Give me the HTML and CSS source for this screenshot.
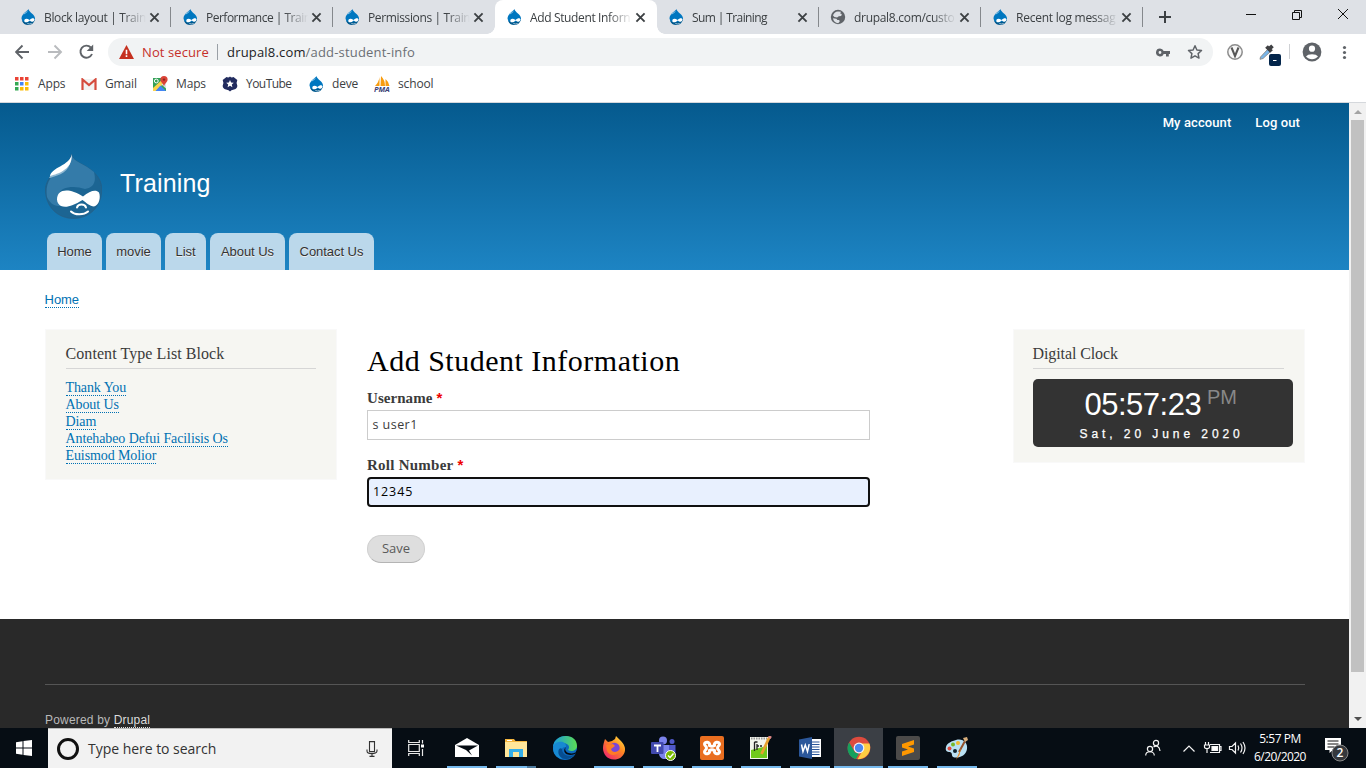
FILE: index.html
```html
<!DOCTYPE html>
<html lang="en">
<head>
<meta charset="utf-8">
<title>Add Student Information | Training</title>
<link rel="stylesheet" href="styles.css">
</head>
<body>
<svg class="defs" width="0" height="0">
  <symbol id="drop" viewBox="0 0 16 16">
    <path fill="#0077c0" d="M8.4 0C8 1.8 1.500 4.600 1.500 9.600a6.800 6.400 0 0 0 13.500 0C15 5.200 9 3.500 8.400 0z"/>
    <path fill="#00598e" d="M13 11c-2 2.500-8 3-11 .5C3 14.500 5 16 8.400 16c3 0 5.600-2 6.400-5z"/>
    <path fill="#9ccdea" d="M7.800 1.600C6.500 3 4.500 3.900 3.200 5.600c2-.6 4-2 4.600-4z"/>
    <path fill="#fff" d="M4.300 11.700c0-2.300 2.700-2.700 5.200-.7 2-1.700 4.500-2.500 4.800-.4.300 2.400-2.500 3-4.600.8-2 2-5.400 3-5.400.3zM7 14c1.800 1 3.300 1 5 0-.5 1.600-4.400 1.700-5 0z"/>
  </symbol>
  <symbol id="close" viewBox="0 0 10 10"><path d="M1.300 1.300l7.400 7.400M8.700 1.300L1.300 8.700" stroke="#3c4043" stroke-width="1.700"/></symbol>
</svg>

<div class="tabstrip">
  <div class="tab"><svg class="fav"><use href="#drop"/></svg><span class="tab-title">Block layout | Train</span><svg class="x"><use href="#close"/></svg></div>
  <div class="tab"><svg class="fav"><use href="#drop"/></svg><span class="tab-title t-perf">Performance | Train</span><svg class="x"><use href="#close"/></svg></div>
  <div class="tab no-sep"><svg class="fav"><use href="#drop"/></svg><span class="tab-title">Permissions | Train</span><svg class="x"><use href="#close"/></svg></div>
  <div class="tab active no-sep"><svg class="fav"><use href="#drop"/></svg><span class="tab-title">Add Student Inforn</span><svg class="x"><use href="#close"/></svg></div>
  <div class="tab"><svg class="fav"><use href="#drop"/></svg><span class="tab-title full">Sum | Training</span><svg class="x"><use href="#close"/></svg></div>
  <div class="tab"><svg class="fav" viewBox="0 0 16 16"><circle cx="8" cy="8" r="7.200" fill="#5f6368"/><path fill="#dee1e6" d="M8 2.500l3 .3-.8 1.700 1.600.6-.6 1.900-2.400.3-1.700 1.300-2.600-.5-1.500-1.500C3.500 4.500 5.500 2.500 8 2.500zM3 9.200l3.400.6 1 1.200 1.800.1.500 1.400-1.500 1.700C5.500 14 3.200 12 3 9.200z"/></svg><span class="tab-title t-url">drupal8.com/custo</span><svg class="x"><use href="#close"/></svg></div>
  <div class="tab"><svg class="fav"><use href="#drop"/></svg><span class="tab-title t-log">Recent log messag</span><svg class="x"><use href="#close"/></svg></div>
  <svg class="newtab" viewBox="0 0 14 14"><path d="M7 1v12M1 7h12" stroke="#3c4043" stroke-width="2"/></svg>
  <svg class="winctl" viewBox="0 0 104 14" fill="none" stroke="#111" stroke-width="1"><path d="M0 7.500h10M46.500 5.500h7v7h-7zM48.500 5V3.500h7v7H54M92 2l10 10M102 2L92 12"/></svg>
</div>

<div class="toolbar">
  <svg class="navs" viewBox="0 0 84 20" fill="none" stroke="#5f6368" stroke-width="1.900"><path d="M14 10H1.500M7.500 3.500L1 10l6.500 6.500"/><path stroke="#b9bbbe" d="M33 10h12.500M39.500 3.500L46 10l-6.500 6.500"/><path d="M75.800 5.500A6 6 0 1 0 77 12"/><path d="M78.200 2.500v6.500h-6.500z" fill="#5f6368" stroke="none"/></svg>
  <div class="omnibox">
    <svg class="warn" viewBox="0 0 14 13"><path d="M7 0l7 13H0z" fill="#c5301f"/><path d="M7 4.500v4M7 9.500v1.600" stroke="#fff" stroke-width="1.500"/></svg>
    <span class="insecure">Not secure</span><i class="vsep"></i>
    <span class="url">drupal8.com<span>/add-student-info</span></span>
    <svg class="key" viewBox="0 0 14 9"><path fill="#5f6368" fill-rule="evenodd" d="M4 .4a4 4 0 0 1 3.700 2.500H14v3h-1.200v2.600H10V5.900H7.700A4 4 0 1 1 4 .4zm0 2.700a1.400 1.400 0 1 0 0 2.800 1.400 1.400 0 0 0 0-2.800z"/></svg>
    <svg class="star" viewBox="0 0 16 16"><path fill="none" stroke="#5f6368" stroke-width="1.500" stroke-linejoin="round" d="M8 1.800l1.900 4.200 4.600.5-3.400 3.100.9 4.500-4-2.300-4 2.300.9-4.500L1.500 6.500l4.600-.5z"/></svg>
  </div>
  <svg class="ext" viewBox="0 0 130 28"><circle cx="9" cy="14" r="7.200" fill="#f7f7f7" stroke="#8c8c8c" stroke-width="1.500"/><path d="M5.500 9.500L9 18l3.500-8.500" fill="none" stroke="#555" stroke-width="2"/><path d="M34.500 19l7.500-8 2.500 2.500-7.500 7-3 .8z" fill="#79b6ea" stroke="#888" stroke-width=".9"/><path d="M40.500 8.500l5 5M43 11l3.500-3.200" stroke="#3f4043" stroke-width="3.800"/><rect x="43" y="16" width="12" height="12" rx="2" fill="#03254b"/><path d="M47 22.500h3.500" stroke="#fff"/><path d="M63.500 6v15" stroke="#cfd1d4"/><circle cx="86" cy="14" r="9.400" fill="#5f6368"/><circle cx="86" cy="10.700" r="3.100" fill="#fff"/><path d="M80 18.600c1.400-3.300 10.600-3.300 12 0-2.800 3.400-9.200 3.400-12 0z" fill="#fff"/><g fill="#5f6368"><circle cx="118.500" cy="9.500" r="1.600"/><circle cx="118.500" cy="14.500" r="1.600"/><circle cx="118.500" cy="19.500" r="1.600"/></g></svg>
</div>

<div class="bookmarks">
  <div class="bm b-apps"><svg viewBox="0 0 14 14"><path fill="#ea4335" d="M0 0h3.500v3.500H0zM5 0h3.500v3.500H5zM10 0h3.500v3.500H10z"/><path fill="#34a853" d="M0 5h3.500v3.500H0zM0 10h3.500v3.500H0z"/><path fill="#4285f4" d="M5 5h3.500v3.500H5z"/><path fill="#fbbc04" d="M10 5h3.500v3.500H10zM5 10h3.500v3.500H5zM10 10h3.500v3.500H10z"/></svg><span>Apps</span></div>
  <div class="bm b-gmail"><svg viewBox="0 0 16 12"><path fill="#f2f2f2" d="M1 1h14v11H1z"/><path fill="none" stroke="#d54b3d" stroke-width="2.200" d="M1.500 12V1.500L8 7l6.500-5.500V12"/></svg><span>Gmail</span></div>
  <div class="bm b-maps"><svg viewBox="0 0 16 16"><path fill="#34a057" d="M1 2h13v13H1z"/><path fill="#fcd34b" d="M1 12L12 2l2 3L4 15H1z"/><path fill="#4285f4" d="M3.500 15L8.500 9.500 14 15z"/><path fill="#dce3e8" d="M9.500 8.500l4.500 4V5z"/><circle cx="4.300" cy="5" r="1.900" fill="none" stroke="#fff"/><path fill="#db4437" d="M12 0a3.600 3.600 0 0 1 3.600 3.600c0 2.500-2.800 3.500-3.600 7-.8-3.500-3.600-4.500-3.600-7A3.600 3.600 0 0 1 12 0z"/><circle cx="12" cy="3.600" r="1.200" fill="#8f281e"/></svg><span>Maps</span></div>
  <div class="bm b-yt"><svg viewBox="0 0 16 16"><path fill="#222c5f" d="M4.500 1Q6.500 2 8 .5 9.500 2 11.500 1L15.300 4Q14 6.500 15.300 9.500q.2 3-3.300 4-3 .5-4 2-1-1.500-4-2Q.5 12.500.7 9.500 2 6.500.7 4z"/><path fill="#fff" d="M8 4l1.100 2.500 2.700.2-2 1.800.6 2.700L8 9.800l-2.400 1.400.6-2.700-2-1.800 2.700-.2z"/></svg><span>YouTube</span></div>
  <div class="bm b-deve"><svg><use href="#drop"/></svg><span>deve</span></div>
  <div class="bm b-school"><svg viewBox="0 0 16 16"><path fill="#f89c0e" d="M5.500 1v9H1q4-4 4.500-9zM7 0q4 4 4 10H6.500zM11.500 3q3.500 3 4 7h-4z"/><text x="0" y="15.500" font-size="6.500" font-weight="700" font-style="italic" textLength="15.500" lengthAdjust="spacingAndGlyphs" fill="#3d4478">PMA</text></svg><span>school</span></div>
</div>

<div class="viewport">
  <div class="page">
    <header class="header">
      <nav class="user"><span>My account</span><span>Log out</span></nav>
      <div class="brand">
        <svg class="logo" viewBox="0 0 57 65"><path fill="#1c6593" stroke="#2a5c80" stroke-width=".6" d="M26.500.5c2 8 13 9 22 17.500C55 24 57 30 56.700 36 56.500 53 44 64.500 28.500 64.500S.5 53 .5 36C.5 17 25 14 26.500.500z"/><path fill="#347ba9" d="M26.500.5c2 8 13 9 22.500 17.500 3 12-2 16-9 17-11-4-25-2-26 5 0 4 3 8 6 10-8 5-15 0-18-7C-2 17 25 14 26.500.5z"/><path fill="#8eb8d2" d="M4 23.500C9 18 19 16 26 6c-2 12-11 15-21 18z"/><path fill="#fff" d="M26.800 0C27 9 24 13 17 17.500c-5 3-9 3-12 5C6 13 25 12 26.800 0zM12 45.500c0-10 11-12.500 26-3 7-6 13-7.500 16-4 2 5 0 13-5 14-4 0-8-4-11.500-6.500C28 52 21 54 16 52c-2-1-4-3.500-4-6.500z"/><path fill="none" stroke="#fff" stroke-width="2" stroke-linecap="round" d="M32 53.500c1-4 8-4 9 0M26 57.500c4 4 13 3.500 17 0"/></svg>
        <span class="site">Training</span>
      </div>
      <nav class="menu"><span style="width:55px">Home</span><span style="width:55px">movie</span><span style="width:41px">List</span><span style="width:75px">About Us</span><span style="width:85px">Contact Us</span></nav>
    </header>
    <div class="crumb"><span class="link">Home</span></div>
    <div class="columns">
      <aside class="block left">
        <h2 class="t-list">Content Type List Block</h2>
        <ul>
          <li><span class="link">Thank You</span></li>
          <li><span class="link">About Us</span></li>
          <li><span class="link">Diam</span></li>
          <li><span class="link">Antehabeo Defui Facilisis Os</span></li>
          <li><span class="link">Euismod Molior</span></li>
        </ul>
      </aside>
      <main class="main">
        <h1>Add Student Information</h1>
        <div class="label"><span>Username</span><b class="req">*</b></div>
        <div class="field">s user1</div>
        <div class="label second"><span class="roll">Roll Number</span><b class="req">*</b></div>
        <div class="field focus">12345</div>
        <div class="save">Save</div>
      </main>
      <aside class="block right">
        <h2 class="t-clock">Digital Clock</h2>
        <div class="clock">
          <div class="time"><span class="digits">05:57:23</span><span class="pm">PM</span></div>
          <div class="date">Sat, 20 June 2020</div>
        </div>
      </aside>
    </div>
    <footer class="footer"><div class="powered">Powered by <span>Drupal</span></div></footer>
  </div>
  <div class="scroll"><i class="up"></i><i class="thumb"></i><i class="down"></i></div>
</div>

<div class="taskbar">
  <div class="start"><svg viewBox="0 0 16 16" width="16" height="16"><path fill="#fff" d="M0 2.200L6.500 1.300v6.200H0zM7.500 1.100L16 0v7.500H7.500zM0 8.500h6.500v6.200L0 13.800zM7.500 8.500H16V16l-8.500-1.100z"/></svg></div>
  <div class="search"><i class="cortana"></i><span>Type here to search</span><svg class="mic" viewBox="0 0 12 16" fill="none" stroke="#333" stroke-width="1.100"><path d="M3.500.6h5v10h-5zM1 8.500v1.500c0 3.500 10 3.500 10 0V8.500M6 12.500v3M3.500 15.400h5"/></svg></div>
  <div class="tview"><svg width="16" height="16" viewBox="0 0 16 16" fill="none" stroke="#e8e8e8" stroke-width="1.200"><path d="M.7 0v2.500h10.600V0M.7 4.500h10.600v7H.7zM.7 16v-2.500h10.600V16M14.500 0v3.500M14.500 9v7"/><path d="M13 4.500h3v3h-3z" fill="#fff" stroke="none"/></svg></div>
  <div class="apps">
    <div class="app run"><svg viewBox="0 0 24 24"><path fill="#fff" d="M0 9l12-7 12 7v12H0z"/><path fill="#050b12" d="M1 9.500h22L14 14.500l3 5L11 14z"/></svg></div>
    <div class="app run multi"><svg viewBox="0 0 24 24"><path fill="#f4b63f" d="M1 3h9l1.500 2H23v2H1z"/><path fill="#ffe69a" d="M1 6h22v15H1z"/><path fill="#35aee8" d="M5 13h14v8h-4v-5H9v5H5z"/><path fill="#fff" d="M3 4h5v1H3z"/></svg></div>
    <div class="app"><svg viewBox="0 0 24 24"><defs><linearGradient id="eg"><stop stop-color="#199bdc"/><stop offset="1" stop-color="#5bdc54"/></linearGradient></defs><circle cx="12" cy="12" r="12" fill="#0d6abf"/><path fill="url(#eg)" d="M0 11C1-3 24-4 24 10c0 5-6 6-9 4 3-4-1-7-5-7-5 0-9 2-10 4z"/><path fill="#1789d2" d="M0 12c1-8 14-8 13-1-5-1-6 5-4 12C3 22 0 17 0 12z"/><path fill="#064d91" d="M9 13c0 6 7 9 13 5-4 6-13 7-16 1-2-5 1-8 3-6z"/><path fill="#050b12" d="M13.500 10.500c-4 4 2 9 9 6l1.500-2.500.5 2.500L22 18c-7 3-13-1-10-6z"/></svg></div>
    <div class="app run"><svg viewBox="0 0 24 24"><defs><linearGradient id="fg" x1="1" y1="0" x2=".2" y2="1"><stop stop-color="#fff04a"/><stop offset=".45" stop-color="#ff8a20"/><stop offset="1" stop-color="#f0246d"/></linearGradient></defs><path fill="url(#fg)" d="M3 3l3 3 4-1 3-2 1-3 5 5c3 3 5 7 3.700 11C21 21 17 23.500 12 23.500 5 23.500 1 18 1 12c0-3 1-6 2-9z"/><circle cx="12.500" cy="12" r="5.200" fill="#7a45d8"/><path fill="#ff7b25" d="M4 9l7-1 2 2-4 3c1 4 6 4 9 0-1 7-10 8-13 2z"/></svg></div>
    <div class="app run"><svg viewBox="0 0 24 24" overflow="visible"><circle cx="12" cy="4.500" r="4" fill="#7b83eb"/><circle cx="21" cy="5.500" r="2.500" fill="#5059c9"/><path fill="#7b83eb" d="M8 9h11v8c0 8-11 8-11 0z"/><path fill="#5059c9" d="M18 9h6.500v7c0 5-6.500 5-6.500 0z"/><rect y="6" width="12.500" height="12" rx="1" fill="#4149ad"/><path d="M3 9.500h7M6.500 9.500V16" stroke="#fff" stroke-width="1.800"/><circle cx="19.500" cy="19.500" r="5" fill="#78b900" stroke="#fff"/><path d="M17 19.500l2 2 3.500-4" fill="none" stroke="#fff" stroke-width="1.400"/></svg></div>
    <div class="app run"><svg viewBox="0 0 24 24"><rect width="24" height="24" rx="2" fill="#e96e20"/><path d="M9.500 9.500c1-4-5-4-5-1.500 0 2 2 2 2 4s-2 2-2 4c0 2.500 6 2.500 5-1.500 1.500-1 3.500-1 5 0-1 4 5 4 5 1.500 0-2-2-2-2-4s2-2 2-4c0-2.500-6-2.500-5 1.500-1.500 1-3.500 1-5 0z" fill="none" stroke="#fff" stroke-width="3"/></svg></div>
    <div class="app run"><svg viewBox="0 0 24 24"><path fill="#f2f5ed" d="M1 1h18v22H1z"/><path fill="#70c91c" d="M2 14l16-4v12H2z"/><path d="M2 2.500h16" stroke="#999" stroke-width="2" stroke-dasharray="1.500 1"/><path d="M5.500 6v9M5.500 6h3M8 10h2M11 10h2M8 8v6" stroke="#222" stroke-width="1.300" fill="none"/><path d="M20.500 1L12.500 18" stroke="#e8a12d" stroke-width="2.800"/><path d="M21.500 0l-1.200 2.200" stroke="#d88" stroke-width="3"/></svg></div>
    <div class="app run"><svg viewBox="0 0 24 24"><path fill="#fff" d="M12 3h11v18H12z"/><path d="M14 6h7.500M14 8.500h7.500M14 11h7.500M14 13.500h7.500M14 16h7.500M14 18.500h7.500" stroke="#2b579a" stroke-width="1.200"/><path fill="#2b579a" d="M1 3.500L14 1v22L1 20.500z"/><path fill="none" stroke="#fff" stroke-width="1.500" d="M3.500 8.500l1.500 7 2.300-6.500 2.200 6.500 1.700-7.300"/></svg></div>
    <div class="app run current"><svg viewBox="0 0 24 24"><circle cx="12" cy="12" r="11.300" fill="#dd4b3e"/><path fill="#16a05d" d="M2.200 6.400L8 16.500l4 1-3 5.500C1 21-1.500 12 2.200 6.400z"/><path fill="#ffcd42" d="M12 7.500h10.400C25.500 15 19 23.500 10.500 23.200L16 14z"/><circle cx="12" cy="12" r="5.400" fill="#f5f5f5"/><circle cx="12" cy="12" r="4.200" fill="#4b87ee"/></svg></div>
    <div class="app run"><svg viewBox="0 0 24 24"><rect width="24" height="24" rx="2" fill="#4b4a49"/><path fill="#ff9800" d="M6 8l12-4v4.500l-6 2 6 2V16L6 20v-4.500l6-2-6-2z"/></svg></div>
    <div class="app run"><svg viewBox="0 0 24 24"><path fill="#b9e0f3" d="M11 4C18 2 23 7 22 13c-1 7-9 10-14 8-2-2 0-4-3-5-3 0-5-1-4-5 1-4 6-6 10-7z"/><circle cx="4.500" cy="12.500" r="2" fill="#e04c40"/><circle cx="8" cy="8.500" r="2" fill="#76b82a"/><circle cx="13" cy="7" r="2" fill="#f1b82d"/><circle cx="10" cy="15" r="2" fill="#10232e"/><path d="M20 5l-6 11" stroke="#92522c" stroke-width="2"/><path d="M18 2l4-1 1 3-3 2z" fill="#d7ad7b"/><path d="M16 12l-1.500 7L11 24z" fill="#ed8a21"/></svg></div>
  </div>
  <svg class="tray" viewBox="0 0 104 24" fill="none" stroke="#f4f4f4" stroke-width="1.200"><circle cx="5" cy="13" r="2.600"/><path d="M.7 19.500c0-5 8.600-5 8.600 0"/><circle cx="11" cy="7" r="2.600"/><path d="M8.500 11c3-2 6-.5 6.500 4"/><path d="M38.500 15.500l5.500-5.500 5.500 5.500"/><path d="M65 8.500h9.500v8H65M74.500 10.500H76v4h-1.500"/><path d="M67 10.500h5.500v4H67z" fill="#fff"/><path d="M60.500 6v2.500M63.500 6v2.500M59.500 9h5v2c0 2-5 2-5 0zM62 12v5"/><path d="M84.500 10.500h2.500l3.500-3.500v10L87 13.500h-2.500zM93 9.500q1.500 2.500 0 5M95.500 7.500q3 4.500 0 9M98 6q4 6 0 12"/></svg>
  <div class="when"><span>5:57 PM</span><span class="day">6/20/2020</span></div>
  <svg class="notif" viewBox="0 0 26 28"><path fill="#fff" d="M1 2h16v12H9l-3.500 3v-3H1z"/><path d="M3.500 5h11M3.500 8h11M3.500 11h7" stroke="#111" stroke-width="1.200"/><circle cx="16" cy="17" r="8" fill="#35383c" stroke="#888"/><text x="16" y="21.300" text-anchor="middle" fill="#fff" font-size="12" font-weight="600">2</text></svg>
</div>
</body>
</html>
```
FILE: styles.css
```css
* { box-sizing: border-box; }
body { margin: 0; width: 1366px; height: 768px; overflow: hidden; display: flex; flex-direction: column; background: #fff; font-family: "Open Sans", "Noto Sans", sans-serif; font-size: 12px; color: #3c4043; }
svg { display: block; flex: none; }
i { display: block; flex: none; }
.defs { position: absolute; }
h1, h2, ul { margin: 0; padding: 0; list-style: none; font-weight: 400; }

.tabstrip { height: 34px; flex: none; background: #dee1e6; display: flex; padding-left: 9px; }
.tab { width: 162px; height: 34px; flex: none; display: flex; align-items: center; padding-left: 11px; background: linear-gradient(#85888c, #85888c) no-repeat right 0 top 7px / 1px 20px; }
.tab.no-sep { background: none; }
.tab.active { background: #fff; border-radius: 8px 8px 0 0; position: relative; }
.tab.active::before, .tab.active::after { content: ""; position: absolute; bottom: 0; width: 8px; height: 8px; }
.tab.active::before { left: -8px; background: radial-gradient(circle at 0 0, #dee1e6 7.500px, #fff 8px); }
.tab.active::after { right: -8px; background: radial-gradient(circle at 100% 0, #dee1e6 7.500px, #fff 8px); }
.fav { width: 16px; height: 16px; margin-right: 8px; }
.tab-title { width: 105px; white-space: nowrap; letter-spacing: -.36px; -webkit-mask-image: linear-gradient(90deg, #000 78px, transparent 102px); }
.t-perf { letter-spacing: -.5px; }
.t-url { letter-spacing: -.3px; }
.t-log { letter-spacing: -.25px; }
.full { letter-spacing: -.6px; }
.x { width: 11px; height: 11px; }
.newtab { width: 14px; height: 14px; margin: 10px 0 0 15px; }
.winctl { width: 104px; height: 14px; margin: 7px 0 0 74px; }

.toolbar { height: 36px; flex: none; display: flex; align-items: center; padding-left: 15px; }
.navs { width: 84px; height: 20px; margin-right: 9px; }
.omnibox { width: 1105px; height: 28px; border-radius: 14px; background: #f1f3f4; display: flex; align-items: center; padding-left: 11px; }
.warn { width: 15px; height: 14px; margin-right: 8px; }
.insecure { width: 67px; color: #c5302a; white-space: nowrap; font-size: 13px; letter-spacing: .1px; }
.vsep { width: 1px; height: 16px; background: #9aa0a6; margin: 0 9px 0 8px; }
.url { width: 929px; color: #202124; font-size: 13px; letter-spacing: .18px; }
.url span { color: #6b6f74; }
.key { width: 14px; height: 9px; margin-right: 17px; }
.star { width: 16px; height: 16px; }
.ext { width: 130px; height: 28px; margin-left: 13px; }

.bookmarks { height: 33px; flex: none; border-bottom: 1px solid #d5d8dc; padding-bottom: 5px; display: flex; align-items: center; padding-left: 15px; letter-spacing: -.15px; }
.bm { display: flex; align-items: center; flex: none; white-space: nowrap; }
.bm svg { width: 16px; height: 16px; margin-right: 8px; }
.b-apps { width: 66px; }
.b-apps svg { width: 14px; height: 14px; margin-right: 9px; }
.b-gmail { width: 71px; }
.b-gmail svg { height: 12px; }
.b-maps { width: 70px; }
.b-yt { width: 86px; letter-spacing: -.55px; }
.b-deve { width: 66px; }

.viewport { height: 625px; flex: none; display: flex; }
.page { width: 1349px; height: 625px; overflow: hidden; background: #fff; }
.header { height: 167px; background: linear-gradient(#055a8e, #1d84c3); font-family: "Liberation Sans", sans-serif; display: flex; flex-direction: column; }
.user { height: 39px; display: flex; justify-content: flex-end; gap: 24px; padding-right: 49px; line-height: 39px; font: 500 13px/39px Roboto, sans-serif; color: #fff; letter-spacing: .1px; }
.brand { height: 91px; display: flex; padding: 12px 0 0 45px; }
.logo { width: 57px; height: 65px; margin-right: 18px; }
.site { font-size: 25px; line-height: 30px; margin-top: 14px; color: #fff; letter-spacing: .15px; }
.menu { height: 37px; display: flex; gap: 4px; padding-left: 47px; }
.menu span { display: block; height: 37px; line-height: 37px; text-align: center; border-radius: 8px 8px 0 0; background: #bbd8eb; color: #333; font-size: 13px; letter-spacing: -.05px; text-shadow: 0 1px #eee; white-space: nowrap; }
.link { color: #0071b3; border-bottom: 1px dotted #0071b3; }
.crumb { height: 59px; padding: 22px 0 0 44.600px; font: 13px/15px "Liberation Sans", sans-serif; letter-spacing: -.1px; }
.columns { height: 290px; display: flex; padding-left: 45px; font-family: "Liberation Serif", serif; }
.block { width: 292px; flex: none; background: #f6f6f2; border: 1px solid #f9f9f9; padding: 14px 20px 0 19.500px; }
.left { height: 151px; }
.right { height: 134px; padding-left: 19px; }
.block h2 { height: 25px; line-height: 20px; font-size: 16px; color: #3b3b3b; border-bottom: 1px solid #d6d6d6; white-space: nowrap; margin-bottom: 10px; letter-spacing: .07px; }
.block .t-clock { letter-spacing: -.1px; }
.block li { height: 17px; line-height: 17px; font-size: 14px; white-space: nowrap; letter-spacing: -.1px; }
.block .link { display: inline-block; height: 17px; line-height: 17px; }
.main { width: 503px; margin: 0 142.500px 0 30px; flex: none; }
.main h1 { height: 60px; padding-top: 14px; font-size: 30px; line-height: 36px; color: #000; white-space: nowrap; letter-spacing: .5px; }
.label { height: 21px; line-height: 18px; font-size: 15px; font-weight: 700; color: #3b3b3b; display: flex; gap: 4px; letter-spacing: .05px; }
.roll { letter-spacing: .25px; }
.second { margin-top: 16px; }
.req { color: #e00; font-family: "Liberation Sans", sans-serif; }
.field { height: 30px; border: 1px solid #ccc; padding-left: 4.500px; line-height: 27px; font-family: "Open Sans", sans-serif; font-size: 12.500px; color: #3b3b3b; letter-spacing: .45px; }
.focus { border: 2px solid #101010; border-radius: 4px; background: #e8f0fe; padding-left: 4px; line-height: 25px; color: #000; letter-spacing: .9px; }
.save { width: 58px; height: 28px; margin-top: 28px; border: 1px solid #d0d0d0; border-bottom-color: #b4b4b4; border-radius: 14px; background: #dedede; color: #5a5a5a; font: 13px/25px "Open Sans", sans-serif; text-align: center; }
.clock { width: 260px; height: 68px; border-radius: 5px; background: #333; color: #fff; font-family: "Liberation Sans", sans-serif; }
.time { height: 46px; display: flex; padding-left: 52px; }
.digits { width: 122.500px; font-size: 31px; line-height: 51px; letter-spacing: -.5px; }
.pm { font-size: 20px; line-height: 37px; color: #888; }
.date { padding-left: 47px; font-size: 12px; line-height: 18px; letter-spacing: 3.930px; white-space: nowrap; -webkit-text-stroke: .25px #fff; }
.footer { height: 109px; background: #292929; padding: 65px 44px 0 45px; }
.powered { border-top: 1px solid #555; padding-top: 28px; font: 12px/15px "Liberation Sans", sans-serif; color: #b9b9b9; letter-spacing: .18px; }
.powered span { color: #ddd; border-bottom: 1px dotted #ddd; }
.scroll { width: 17px; height: 625px; background: #f1f1f1; display: flex; flex-direction: column; align-items: center; }
.up, .down { border: 4px solid transparent; width: 8px; }
.up { border-top: 0; border-bottom-color: #a3a3a3; margin: 7px 0 6px; }
.thumb { width: 13px; height: 552px; background: #c1c1c1; }
.down { border-bottom: 0; border-top-color: #505050; margin-top: 45px; }

.taskbar { height: 40px; flex: none; background: #060d14; display: flex; align-items: center; color: #fff; }
.start, .tview { width: 48px; display: flex; justify-content: center; }
.search { width: 344px; height: 40px; background: #f2f2f2; border-top: 1px solid #bbb; display: flex; align-items: center; padding-left: 9px; color: #333; font-size: 14px; }
.cortana { width: 22px; height: 22px; border: 3px solid #111; border-radius: 50%; margin-right: 9px; }
.search span { width: 278px; white-space: nowrap; letter-spacing: -.03px; }
.mic { width: 12px; height: 16px; }
.apps { display: flex; height: 40px; margin-left: 2px; width: 539px; }
.app { width: 49px; height: 40px; flex: none; display: flex; align-items: center; justify-content: center; background: no-repeat center bottom / 40px 2px; }
.app svg { width: 24px; height: 24px; }
.run { background-image: linear-gradient(#76b9ed, #76b9ed); }
.multi { background-image: linear-gradient(90deg, #76b9ed 31px, #4d7a9e 31px); }
.current { background-color: #3b3f45; background-size: 49px 2px; }
.tray { width: 104px; height: 24px; margin-left: 164px; }
.when { width: 62px; text-align: center; line-height: 18px; display: flex; flex-direction: column; font-size: 12px; white-space: nowrap; align-items: center; margin-right: 10px; letter-spacing: -.45px; }
.day { letter-spacing: -.55px; }
.notif { width: 26px; height: 28px; margin-left: 3px; margin-top: 3px; }
```
